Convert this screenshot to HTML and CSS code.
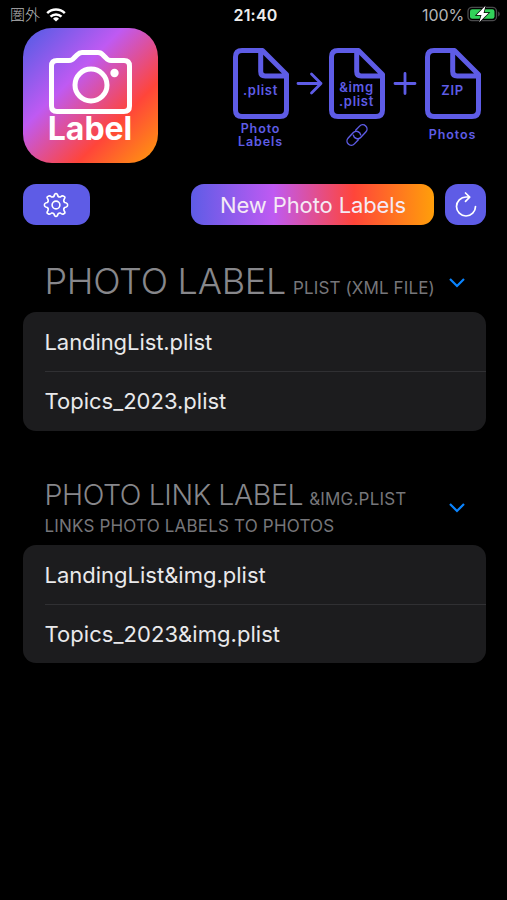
FILE: index.html
```html
<!DOCTYPE html>
<html lang="en">
<head>
<meta charset="utf-8">
<title>Photo Label</title>
<link rel="stylesheet" href="styles.css">
</head>
<body>
<header class="status">
  <div class="status-side">
    <span class="carrier">圏外</span>
    <svg class="wifi" width="20" height="14" viewBox="0 0 20 14" fill="none" stroke="#fff" stroke-width="2.5"><path d="M1.2 5.2a12.6 12.6 0 0 1 17.6 0M4.5 8.6a8 8 0 0 1 11 0"/><path d="M10 13.5 7 10.7a4.4 4.4 0 0 1 6 0z" fill="#fff" stroke="none"/></svg>
  </div>
  <time class="clock">21:40</time>
  <div class="status-side status-right">
    <span class="percent">100%</span>
    <svg class="battery" width="34" height="18" viewBox="0 0 34 18"><rect x="1" y="2.3" width="28.5" height="13.4" rx="4" fill="none" stroke="#4a4a4c" stroke-width="1.3"/><path d="M31.2 6.5c2 .8 2 4.2 0 5z" fill="#4a4a4c"/><rect x="3" y="4.2" width="24.5" height="9.6" rx="2.2" fill="#32d15a"/><path d="M18.5.7 9.5 10h5l-2.3 7.3L21.6 8h-5z" fill="#fff" stroke="#000" stroke-width="1.4" paint-order="stroke"/></svg>
  </div>
</header>

<main>
  <section class="hero">
    <div class="logo">
      <svg class="camera" width="83" height="64" viewBox="0 0 83 64" fill="none" stroke="#fff" stroke-width="5"><path d="M8 10.500h12q3 0 5-2.500l3-3q2.500-2.500 5-2.500h16q3 0 5 2.500l3 3q2 2.500 5 2.500h13q5.500 0 5.500 5.500v40q0 5.500-5.500 5.500H8q-5.500 0-5.500-5.500v-40Q2.500 10.500 8 10.500z"/><circle cx="42" cy="35" r="16"/><circle cx="65.500" cy="23" r="4.200" fill="#fff" stroke="none"/></svg>
      <span class="logo-text">Label</span>
    </div>
    <div class="flow">
      <div class="step">
        <div class="file"><svg width="56" height="71" viewBox="0 0 56 71"><path d="M9 2.500h20.500l24 24V62q0 6.500-6.500 6.500H9q-6.500 0-6.500-6.500V9Q2.500 2.500 9 2.500zM27.700 3v20.500q0 4.500 4.500 4.500H53"/></svg><span class="file-text">.plist</span></div>
        <div class="caption">Photo<br>Labels</div>
      </div>
      <svg class="op" width="40" height="71" viewBox="0 0 40 71"><path d="M9 35.500h23M22.500 26l9.500 9.500-9.500 9.500"/></svg>
      <div class="step">
        <div class="file"><svg width="56" height="71" viewBox="0 0 56 71"><path d="M9 2.500h20.500l24 24V62q0 6.500-6.500 6.500H9q-6.500 0-6.500-6.500V9Q2.500 2.500 9 2.500zM27.700 3v20.500q0 4.500 4.500 4.500H53"/></svg><span class="file-text two">&amp;img<br>.plist</span></div>
        <svg class="link" width="24" height="24" viewBox="0 0 24 24"><g transform="rotate(-46 12 12)"><path d="M9.500 16.300H3.800a4.300 4.300 0 0 1 0-8.600h7.400a4.300 4.300 0 0 1 3.500 6.800M14.500 7.700h5.700a4.300 4.300 0 0 1 0 8.600h-7.400a4.300 4.300 0 0 1-3.500-6.800"/></g></svg>
      </div>
      <svg class="op" width="40" height="71" viewBox="0 0 40 71"><path d="M10 35.500h20M20 25.500v20"/></svg>
      <div class="step">
        <div class="file"><svg width="56" height="71" viewBox="0 0 56 71"><path d="M9 2.500h20.500l24 24V62q0 6.500-6.500 6.500H9q-6.500 0-6.500-6.500V9Q2.500 2.500 9 2.500zM27.700 3v20.500q0 4.500 4.500 4.500H53"/></svg><span class="file-text zip">ZIP</span></div>
        <div class="caption single">Photos</div>
      </div>
    </div>
  </section>

  <nav class="toolbar">
    <button class="btn settings" aria-label="Settings"><svg width="26" height="26" viewBox="-13 -13 26 26" fill="none" stroke="#fff" stroke-width="1.600" stroke-linejoin="round"><path d="M-1.400-10.500Q0-12.500 1.400-10.500Q2-7.600 4.400-8Q6.200-9.800 7.800-8.800Q9.800-8 8.400-6.400Q6.900-3.800 8.700-2.500Q12-1.800 11.500 0Q12 1.800 8.700 2.500Q6.900 3.800 8.400 6.400Q9.800 8 7.800 8.800Q6.200 9.800 4.400 8Q2 7.600 1.400 10.500Q0 12.500-1.400 10.500Q-2 7.600-4.400 8Q-6.200 9.800-7.800 8.800Q-9.800 8-8.400 6.400Q-6.900 3.800-8.700 2.500Q-12 1.800-11.500 0Q-12-1.800-8.700-2.500Q-6.900-3.800-8.400-6.400Q-9.800-8-7.800-8.800Q-6.200-9.800-4.400-8Q-2-7.600-1.400-10.500z"/><circle r="3.900"/></svg></button>
    <button class="btn create">New Photo Labels</button>
    <button class="btn reload" aria-label="Reload"><svg width="24" height="28" viewBox="0 0 24 28" fill="none" stroke="#fff" stroke-width="1.700" stroke-linecap="round" stroke-linejoin="round"><path d="M21.500 15.500A9.500 9.500 0 1 1 12 6h3M11.500 2l4.200 4.100-4.200 4.200"/></svg></button>
  </nav>

  <section class="group first">
    <div class="heading">
      <h2><span class="title big">PHOTO LABEL</span><span class="note n1">PLIST (XML FILE)</span></h2>
      <svg class="chevron" width="18" height="11" viewBox="0 0 18 11"><path d="M2 2l7 7 7-7"/></svg>
    </div>
    <ul class="list">
      <li><span class="r1">LandingList.plist</span></li>
      <li><span class="r2">Topics_2023.plist</span></li>
    </ul>
  </section>

  <section class="group second">
    <div class="heading">
      <h2><span class="title medium">PHOTO LINK LABEL</span><span class="note n2">&amp;IMG.PLIST</span><br><span class="subtitle">LINKS PHOTO LABELS TO PHOTOS</span></h2>
      <svg class="chevron" width="18" height="11" viewBox="0 0 18 11"><path d="M2 2l7 7 7-7"/></svg>
    </div>
    <ul class="list">
      <li><span class="r3">LandingList&amp;img.plist</span></li>
      <li><span class="r4">Topics_2023&amp;img.plist</span></li>
    </ul>
  </section>
</main>
</body>
</html>
```
FILE: styles.css
```css
* { box-sizing: border-box; }
body { margin: 0; height: 900px; background: #000; color: #e9e9eb; font-family: Inter, "Noto Sans CJK JP", sans-serif; overflow: hidden; }
main { padding: 0 21px 0 22.5px; }
.status { height: 28px; padding: 0 6px 0 10px; display: grid; grid-template-columns: 1fr auto 1fr; align-items: center; font-size: 16px; line-height: 28px; }
.status-side { display: flex; align-items: center; gap: 6px; color: #b5b5b7; }
.status-right { justify-content: flex-end; gap: 3px; }
.carrier { font: 300 15px/28px "Noto Sans CJK JP", sans-serif; }
.wifi { margin-top: 1px; }
.clock { color: #ededed; font-weight: 600; letter-spacing: .2px; position: relative; top: 1px; }
.percent { letter-spacing: -.1px; position: relative; top: 1px; }

.hero { height: 135px; display: flex; justify-content: space-between; }
.logo { width: 135px; height: 135px; border-radius: 29px; background: linear-gradient(135deg, #5e5ce6 5%, #bf5af2 37%, #ff453a 70%, #ff9f0a 101%); display: flex; flex-direction: column; align-items: center; padding-top: 22px; }
.logo-text { color: #fff; font-size: 32px; line-height: 32px; font-weight: 700; margin-top: -1px; }
.flow { display: flex; align-items: flex-start; padding: 20px 5.500px 0 0; color: #5e5ce6; }
.step { width: 56px; display: flex; flex-direction: column; align-items: center; }
.file { display: grid; width: 56px; height: 71px; }
.file > * { grid-area: 1 / 1; }
.file path { fill: none; stroke: #5e5ce6; stroke-width: 5; stroke-linejoin: round; }
.file-text { align-self: end; text-align: center; font-size: 13px; line-height: 14px; font-weight: 600; letter-spacing: .7px; padding-bottom: 22px; }
.two { padding-bottom: 11px; }
.op { fill: none; stroke: #5e5ce6; stroke-width: 2.8; stroke-linecap: round; stroke-linejoin: round; }
.caption { width: 60px; text-align: center; font-size: 12.500px; line-height: 13.500px; font-weight: 600; letter-spacing: .9px; margin-top: 2.500px; }
.single { margin-top: 9px; }
.link { margin-top: 4px; fill: none; stroke: #5e5ce6; stroke-width: 1.400; stroke-linecap: round; }

.toolbar { display: flex; margin-top: 21px; height: 41px; }
.btn { border: 0; padding: 0; border-radius: 13px; background: #5e5ce6; display: flex; align-items: center; justify-content: center; color: #f5eaf5; font: 400 22px/41px Inter, sans-serif; }
.settings { width: 67.500px; }
.create { width: 243px; margin-left: auto; padding: 1px 0 0 1px; letter-spacing: -.12px; background: linear-gradient(90deg, #5e5ce6, #bf5af2 34%, #ff453a 67%, #ff9f0a); }
.reload { width: 41px; margin-left: 11px; }

.heading { padding: 0 20px 0 22px; display: flex; align-items: center; justify-content: space-between; color: #87878b; }
.first .heading { height: 87px; padding-top: 27px; }
.first h2 { padding-top: 5px; }
.second .heading { height: 114px; padding-top: 39px; }
h2 { margin: 0; font-weight: 300; white-space: nowrap; line-height: 30px; }
.second h2 { padding-top: 4px; }
.big { font-size: 36px; letter-spacing: -.25px; }
.medium { font-size: 28.500px; letter-spacing: -.4px; }
.note { font-size: 17px; font-weight: 400; margin-left: 7px; color: #76767a; }
.n1 { letter-spacing: .12px; }
.n2 { letter-spacing: .2px; margin-left: 6px; }
.subtitle { display: block; font-size: 17px; font-weight: 400; line-height: 24px; letter-spacing: .18px; color: #76767a; }
.chevron { fill: none; stroke: #0a84ff; stroke-width: 2.200; }
.list { list-style: none; margin: 0; padding: 0 0 0 22px; height: 118.500px; border-radius: 13px; background: #1c1c1e; font-size: 22px; }
.list li { height: 59px; line-height: 60px; }
.list li + li { border-top: 1px solid #303033; line-height: 59px; }
.r1 { letter-spacing: -.08px; }
.r4 { letter-spacing: .05px; }
```
